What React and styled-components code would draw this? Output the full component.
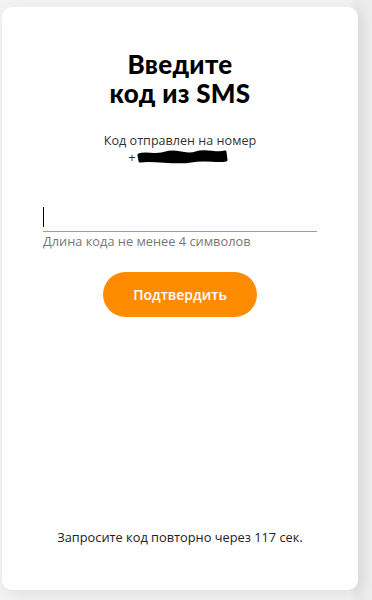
import React, { useState } from 'react';
import styled, { createGlobalStyle } from 'styled-components';

const GlobalStyle = createGlobalStyle`
  html, body {
    margin: 0;
    padding: 0;
    background: #f0f0f0;
  }
  body {
    font-family: 'Open Sans', 'Noto Sans', sans-serif;
  }
`;

const App = () => {
  const [code, setCode] = useState('');
  const seconds = 117;

  return (
    <StyledPage>
      <GlobalStyle />
      <StyledCard>
        <StyledTitle>
          Введите
          <br />
          код из SMS
        </StyledTitle>

        <StyledSent>Код отправлен на номер</StyledSent>
        <StyledPhone>
          <span>+</span>
          <svg width="92" height="14" viewBox="0 0 92 14">
            <path
              d="M3 5 C 10 2, 20 7, 30 3 S 50 7, 60 3 S 80 5, 89 2 L 90 10 C 80 12, 70 8, 55 11 S 20 9, 4 11 Z"
              fill="#000"
              stroke="#000"
              strokeWidth="3"
              strokeLinejoin="round"
            />
          </svg>
        </StyledPhone>

        <StyledField>
          <StyledInputWrap>
            <StyledInput
              value={code}
              onChange={(e) => setCode(e.target.value)}
              inputMode="numeric"
            />
            {!code && <StyledCaret />}
          </StyledInputWrap>
          <StyledUnderline />
          <StyledHint>Длина кода не менее 4 символов</StyledHint>
        </StyledField>

        <StyledButton type="button">Подтвердить</StyledButton>

        <StyledResend>Запросите код повторно через {seconds} сек.</StyledResend>
      </StyledCard>
    </StyledPage>
  );
};

const StyledPage = styled('div')({
  minHeight: '600px',
  padding: '7px 14px 10px 2px',
  boxSizing: 'border-box',
  background: 'linear-gradient(90deg, #f2f2f2 0%, #f2f2f2 94%, #e8e8e8 96%, #eeeeee 100%)'
});

const StyledCard = styled('div')({
  width: '356px',
  height: '583px',
  boxSizing: 'border-box',
  background: '#fff',
  borderRadius: '10px',
  boxShadow: '4px 4px 14px rgba(0, 0, 0, 0.08)',
  display: 'flex',
  flexDirection: 'column',
  alignItems: 'center',
  padding: '43px 41px 45px'
});

const StyledTitle = styled('h1')({
  margin: 0,
  height: '58px',
  fontFamily: "'Lato', 'Noto Sans', sans-serif",
  fontWeight: 900,
  fontSize: '26px',
  lineHeight: '29px',
  color: '#000',
  textAlign: 'center',
  letterSpacing: '0.3px'
});

const StyledSent = styled('p')({
  margin: '25px 0 0',
  height: '16px',
  fontSize: '12.6px',
  lineHeight: '16px',
  color: '#333'
});

const StyledPhone = styled('div')({
  display: 'flex',
  alignItems: 'center',
  height: '16px',
  fontSize: '13px',
  lineHeight: '16px',
  color: '#333',
  marginLeft: '-4px'
});

const StyledField = styled('div')({
  alignSelf: 'stretch',
  marginTop: '38px',
  display: 'flex',
  flexDirection: 'column'
});

const StyledInputWrap = styled('div')({
  position: 'relative',
  height: '28px'
});

const StyledInput = styled('input')({
  display: 'block',
  width: '100%',
  boxSizing: 'border-box',
  height: '28px',
  padding: 0,
  border: 'none',
  outline: 'none',
  fontSize: '18px',
  fontFamily: 'inherit',
  caretColor: '#000',
  background: 'transparent'
});

const StyledUnderline = styled('div')({
  height: '1px',
  background: '#f39200'
});

const StyledCaret = styled('span')({
  position: 'absolute',
  left: 0,
  top: '4px',
  width: '1px',
  height: '20px',
  background: '#000',
  pointerEvents: 'none'
});

const StyledHint = styled('span')({
  marginTop: '1px',
  fontSize: '12.8px',
  lineHeight: '16px',
  color: '#777'
});

const StyledButton = styled('button')({
  marginTop: '23px',
  width: '154px',
  height: '45px',
  border: 'none',
  borderRadius: '23px',
  background: '#ff8c00',
  color: '#fff',
  fontFamily: 'inherit',
  fontSize: '14px',
  fontWeight: 600,
  cursor: 'pointer',
  '&:hover': {
    filter: 'brightness(0.95)'
  }
});

const StyledResend = styled('p')({
  marginTop: 'auto',
  marginBottom: 0,
  fontSize: '12.8px',
  lineHeight: '16px',
  color: '#222'
});

export default App;
